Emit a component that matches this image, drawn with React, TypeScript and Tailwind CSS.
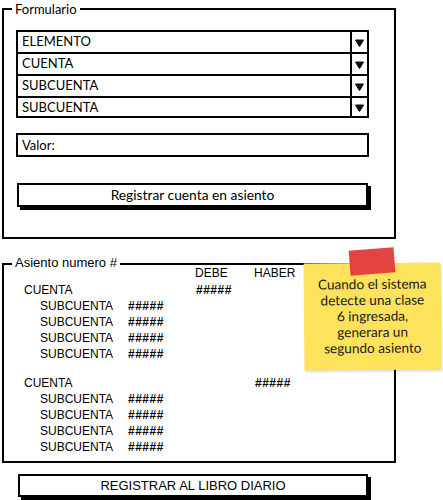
import React from 'react';

const sketch = { fontFamily: 'Lato, "Liberation Sans", sans-serif' };
const arial = { fontFamily: '"Liberation Sans", Arial, sans-serif' };

const selects = ['ELEMENTO', 'CUENTA', 'SUBCUENTA', 'SUBCUENTA'];

const Arrow: React.FC = () => (
  <svg width="9" height="8" viewBox="0 0 9 8">
    <path d="M0.5 1 L8.5 1 L5 7 Q4.5 7.8 4 7 Z" fill="#111" stroke="#111" strokeWidth="1" strokeLinejoin="round" />
  </svg>
);

const SubRow: React.FC = () => (
  <div className="flex h-4 pl-[36px]">
    <span className="w-[88px]">SUBCUENTA</span>
    <span className="font-bold tracking-[0.5px]">#####</span>
  </div>
);

const App: React.FC = () => {
  return (
    <div className="w-[443px] h-[500px] bg-white text-black overflow-hidden">
      {/* Formulario */}
      <div className="relative ml-[2px] mt-[8px] w-[394px] h-[231px] border-2 border-black pl-[12px] pt-[20px]" style={sketch}>
        <span className="absolute left-[8px] -top-[9px] bg-white px-[3px] text-[13px] leading-4">Formulario</span>

        <div className="flex flex-col w-[353px]">
          {selects.map((label, i) => (
            <div
              key={i}
              className={`flex h-[22px] border-x-2 border-t-2 border-black ${i === selects.length - 1 ? 'border-b-2' : ''}`}
            >
              <span className="flex-1 pl-[4px] text-[13px] leading-[19px]">{label}</span>
              <span className="w-[17px] border-l-2 border-black flex items-center justify-center pt-[1px]">
                <Arrow />
              </span>
            </div>
          ))}
        </div>

        <div className="mt-[15px] w-[353px] h-[24px] border-2 border-black pl-[4px] text-[13px] leading-[20px]">Valor:</div>

        <div className="mt-[26px] ml-[1px] w-[351px] h-[24px] border-2 border-black shadow-[3px_3px_0_#000] text-center text-[13.8px] leading-[20px]">
          Registrar cuenta en asiento
        </div>
      </div>

      {/* Asiento */}
      <div className="relative ml-[2px] mt-[24px] w-[394px] h-[200px] border-2 border-black text-[12px] leading-4" style={arial}>
        <span className="absolute left-[8px] -top-[10px] bg-white px-[3px] text-[13px]">Asiento numero #</span>

        <div className="flex h-4 pl-[191px]">
          <span className="w-[59px]">DEBE</span>
          <span>HABER</span>
        </div>
        <div className="flex h-4 pl-[20px] mt-[1px]">
          <span className="w-[172px]">CUENTA</span>
          <span className="font-bold tracking-[0.5px]">#####</span>
        </div>
        <SubRow />
        <SubRow />
        <SubRow />
        <SubRow />

        <div className="flex h-4 pl-[20px] mt-[13px]">
          <span className="w-[172px]">CUENTA</span>
          <span className="w-[59px]" />
          <span className="font-bold tracking-[0.5px]">#####</span>
        </div>
        <SubRow />
        <SubRow />
        <SubRow />
        <SubRow />

        {/* sticky note */}
        <div
          className="absolute left-[300px] -top-[2px] w-[137px] h-[107px] bg-[#fde35c] shadow-[1px_2px_2px_rgba(0,0,0,0.12)] -rotate-[0.5deg] pt-[13px] text-center text-[13.6px] leading-4 text-[#1a1a1a]"
          style={sketch}
        >
          <div className="absolute left-[46px] -top-[14px] w-[45px] h-[25px] bg-[#e03a3a] -rotate-[4deg] opacity-95" />
          <p className="px-[4px]">
            Cuando el sistema
            <br />
            detecte una clase
            <br />
            6 ingresada,
            <br />
            generara un
            <br />
            segundo asiento
          </p>
        </div>
      </div>

      <div
        className="mt-[11px] ml-[18px] w-[350px] h-[23px] border-2 border-black shadow-[3px_3px_0_#000] text-center text-[13px] leading-[19px]"
        style={arial}
      >
        REGISTRAR AL LIBRO DIARIO
      </div>
    </div>
  );
};

export default App;
